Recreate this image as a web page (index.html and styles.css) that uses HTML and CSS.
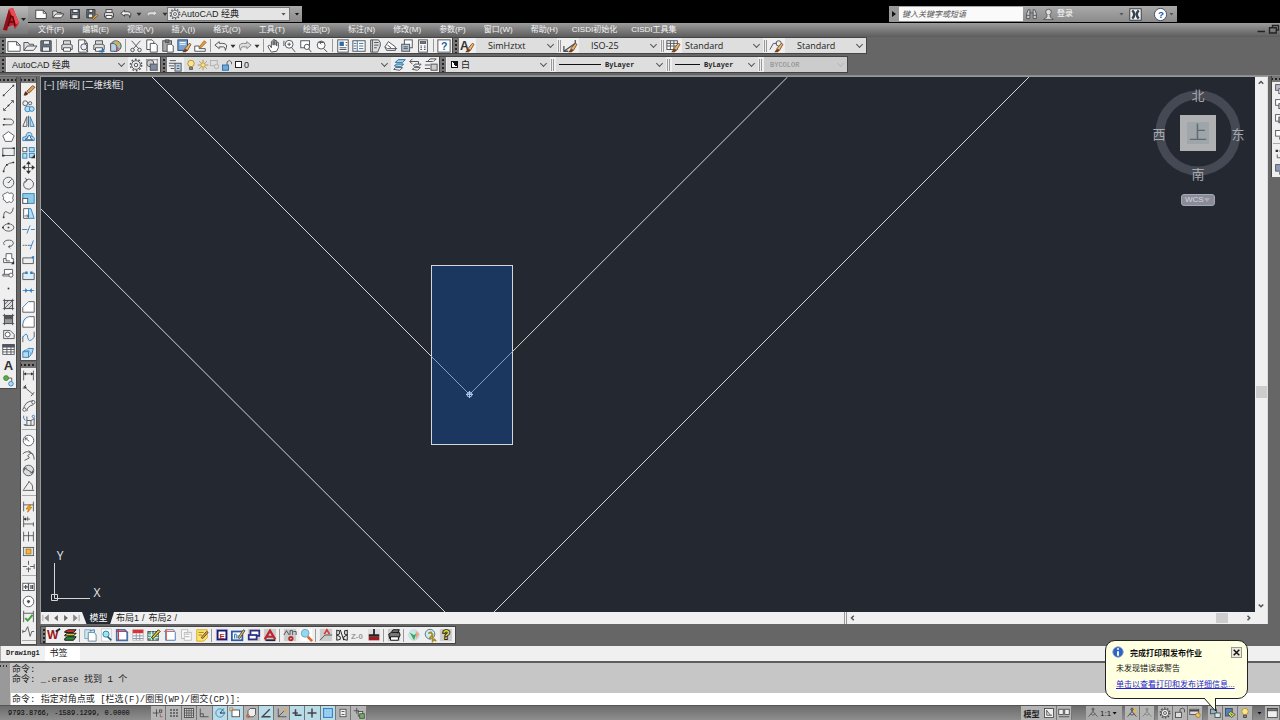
FILE: index.html
```html
<!DOCTYPE html>
<html lang="zh-CN">
<head>
<meta charset="utf-8">
<title>AutoCAD 经典 - Drawing1</title>
<link rel="stylesheet" href="styles.css">
</head>
<body>
<div class="app">
  <header class="head">
    <button class="logo" aria-label="应用程序菜单">
      <svg viewBox="0 0 28 28" width="28" height="28">
        <path d="M3 24 9 3l4-1 6 15-4 6-2-4-5 2-1 4z" fill="#c8202c"/>
        <path d="M3 24 9 3l2 6-4 15z" fill="#8c0f1a"/>
        <path d="m9 3 4-1 6 15-3 1z" fill="#f04a50"/>
        <path d="m8 20 3-10 2 1 2 9M9 16h5" stroke="#5c0810" stroke-width="1.500" fill="none"/>
        <path d="M21 12h5l-2.500 3z" fill="#222"/>
      </svg>
    </button>
    <div class="title">
      <div class="quick">
        <div class="tools" data-tools="new open save saveas print undo dd redo dd"></div>
        <label class="pick workspace"><svg class="i" data-icon="gear"></svg><select aria-label="工作空间"><option>AutoCAD 经典</option></select><i class="tri"></i></label>
        <button class="more" aria-label="自定义快速访问工具栏"><i class="tri dark"></i></button>
      </div>
      <div class="info">
        <button class="show" aria-label="展开"><i class="play"></i></button>
        <input class="search" type="text" aria-label="搜索" placeholder="键入关键字或短语">
        <div class="tools" data-tools="find user"></div>
        <button class="login">登录</button>
        <i class="tri"></i>
        <div class="tools" data-tools="exchange | question"></div>
        <i class="tri"></i>
      </div>
    </div>
    <nav class="menu">
      <button>文件(F)</button><button>编辑(E)</button><button>视图(V)</button><button>插入(I)</button><button>格式(O)</button><button>工具(T)</button><button>绘图(D)</button><button>标注(N)</button><button>修改(M)</button><button>参数(P)</button><button>窗口(W)</button><button>帮助(H)</button><button class="plug">CISDI初始化</button><button class="plug">CISDI工具集</button>
      <span class="wins"><button aria-label="最小化"><svg class="i" data-icon="min"></svg></button><button aria-label="还原"><svg class="i" data-icon="restore"></svg></button></span>
    </nav>
  </header>

  <div class="bars">
    <div class="row">
      <div class="bar"><i class="grip"></i><div class="tools" data-tools="new open save | print preview plot publish | cut copy paste match blockedit | undo dd redo dd | pan zoom zoomwin zoomprev | props center palette sheet markup calc | help"></div></div>
      <div class="bar styles"><i class="grip"></i>
        <div class="tools" data-tools="textstyle"></div><label class="pick sel far"><select aria-label="文字样式"><option>SimHztxt</option></select></label><i class="rule"></i>
        <div class="tools" data-tools="dimstyle"></div><label class="pick sel far"><select aria-label="标注样式"><option>ISO-25</option></select></label><i class="rule"></i>
        <div class="tools" data-tools="tablestyle"></div><label class="pick sel"><select aria-label="表格样式"><option>Standard</option></select></label><i class="rule"></i>
        <div class="tools" data-tools="leaderstyle"></div><label class="pick sel far"><select aria-label="多重引线样式"><option>Standard</option></select></label>
      </div>
    </div>
    <div class="row">
      <div class="bar"><i class="grip"></i><label class="pick ws"><select aria-label="工作空间列表"><option>AutoCAD 经典</option></select></label><div class="tools" data-tools="gear wssave"></div></div>
      <div class="bar"><i class="grip"></i><div class="tools" data-tools="layers"></div>
        <label class="pick layer"><svg class="i" data-icon="bulb"></svg><svg class="i" data-icon="sun"></svg><svg class="i" data-icon="freeze"></svg><svg class="i" data-icon="unlock"></svg><b class="box"></b><select aria-label="图层"><option>0</option></select></label>
        <div class="tools" data-tools="layercur layerprev layerstate"></div></div>
      <div class="bar"><i class="grip"></i>
        <label class="pick color"><b class="half"></b><select aria-label="颜色"><option>白</option></select></label><i class="rule"></i>
        <label class="pick ltype mono"><b class="line long"></b><select aria-label="线型"><option>ByLayer</option></select></label><i class="rule"></i>
        <label class="pick lweight mono"><b class="line"></b><select aria-label="线宽"><option>ByLayer</option></select></label><i class="rule"></i>
        <label class="pick plots mono off"><select aria-label="打印样式" disabled><option>BYCOLOR</option></select></label>
      </div>
    </div>
  </div>

  <main class="work">
    <aside class="dock">
      <div class="vbar draw"><i class="hgrip"></i><div class="tools v" data-tools="line xline pline polygon rect arc circle cloud spline ellipse earc insert block point hatch gradient region table mtext addsel"></div></div>
      <div class="stack">
        <div class="vbar modify"><i class="hgrip"></i><div class="tools v" data-tools="erase copyobj mirror offset array move rotate scale stretch trim extend breakpt break join chamfer fillet blend explode"></div></div>
        <div class="vbar dims"><i class="hgrip"></i><div class="tools v" data-tools="dlinear daligned darc dord | dradius djog ddia dang | dquick dbase dcont dspace dbreak | dtol dcenter dinspect djogline |"></div></div>
      </div>
    </aside>

    <section class="center">
      <div class="frame">
        <div class="canvas">
          <svg class="drawing" viewBox="41 77 1214 535" preserveAspectRatio="xMidYMid slice">
            <g stroke="#d4d6d9" fill="none" stroke-width="1">
              <path d="M152 77 469.500 394.500 787.500 77M41 209 445 612M494 612 1029 77"/>
              <rect x="431.500" y="265.500" width="81" height="179" fill="#1c375f"/>
              <path d="m431.500 356.500 38 38 43-43" stroke="#7f9fca"/>
              <circle cx="469.500" cy="394.500" r="2.500" stroke="#a9c8ee"/>
              <path d="M466 394.500h7M469.500 391v7" stroke="#a9c8ee"/>
              <path d="M54.500 563v35.500H90M51.500 594.500h6v6h-6z"/>
            </g>
            <g fill="none" stroke="#444954" stroke-width="9"><circle cx="1198" cy="133" r="38"/></g>
            <g class="compass"><text x="1198" y="100">北</text><text x="1198" y="179">南</text><text x="1159" y="139">西</text><text x="1238" y="139">东</text></g>
            <rect x="1180" y="115" width="36" height="36" fill="#aeb0b2"/>
            <rect x="1187" y="122" width="22" height="22" fill="#9fa6ab"/>
            <text class="face" x="1198" y="139">上</text>
            <g class="axis"><text x="60" y="560">Y</text><text x="97" y="597">X</text></g>
          </svg>
          <div class="view">[−] [俯视] [二维线框]</div>
          <button class="wcs">WCS <i></i></button>
        </div>
        <div class="vscroll"><svg class="i" data-icon="up"></svg><i class="s1"></i><b></b><i class="s2"></i><svg class="i" data-icon="down"></svg></div>
        <div class="under">
          <div class="nav"><svg class="i" data-icon="first"></svg><svg class="i" data-icon="prev"></svg><svg class="i" data-icon="next"></svg><svg class="i" data-icon="last"></svg></div>
          <button class="tab on">模型</button><button class="tab">布局1</button><i class="slash">/</i><button class="tab">布局2</button><i class="slash">/</i>
          <div class="hscroll"><svg class="i" data-icon="left"></svg><i></i><b></b><svg class="i" data-icon="right"></svg></div>
        </div>
      </div>
      <div class="extra"><i class="grip"></i><div class="tools" data-tools="cw cbooks | cfile csearch cframe ctable cedit cpage ccopy cnote | ce cpen cwin ca | cab cfind | cred cbb cz cbrush | cprint | cball cq1 cq2"></div></div>
    </section>

    <aside class="right"><div class="rbar"><i class="hgrip"></i><div class="tools v" data-tools="ord1 ord2 ord3 ord4 | ord5 ord6"></div></div></aside>
  </main>

  <div class="files"><button class="file mono">Drawing1</button><button class="file on">书签</button></div>

  <section class="cmd">
    <div class="cgrip"><i></i></div>
    <div class="ctext">
      <div class="log"><div>命令:</div><div>命令: _.erase 找到 1 个</div></div>
      <label class="prompt"><span>命令: 指定对角点或 [栏选(F)/圈围(WP)/圈交(CP)]:</span><input type="text" aria-label="命令行"></label>
    </div>
  </section>

  <footer class="status">
    <div class="coords">9793.8766, -1589.1299, 0.0000</div>
    <div class="tools s modes" data-tools="sinfer ssnap sgrid sortho spolar* sosnap* s3d strack* sucs sdyn* slwt* stran* sqp ssel"></div>
    <div class="sright">
      <button class="model">模型</button><div class="tools s" data-tools="slay sviews"></div>
      <div class="scale"><svg class="i" data-icon="person"></svg><span>1:1</span><i class="tri dark"></i></div>
      <div class="tools s" data-tools="personon personauto"></div>
      <div class="tools s" data-tools="gear unlock2 shard"></div>
      <div class="tools s tray" data-tools="splot scolor bulb"></div>
      <i class="tri dark"></i><div class="tools s" data-tools="sclean"></div>
    </div>
  </footer>

  <div class="balloon" role="status">
    <div class="bhead"><svg class="i" data-icon="infoball"></svg><strong>完成打印和发布作业</strong><button aria-label="关闭"><svg class="i" data-icon="x"></svg></button></div>
    <p>未发现错误或警告</p>
    <a href="#">单击以查看打印和发布详细信息...</a>
    <svg class="tail" viewBox="0 0 14 15" width="14" height="15"><path d="M1 0 12.500 13V0" fill="#ffffe1" stroke="#222"/></svg>
  </div>
</div>
<script src="app.js"></script>
</body>
</html>
```
FILE: styles.css
```css
* { box-sizing: border-box; }
body { margin: 0; background: #666; font: 9px "Liberation Sans", "Noto Sans CJK SC", sans-serif; color: #222; }
button, select, input { font: inherit; color: inherit; border: 0; padding: 0; margin: 0; background: none; border-radius: 0; white-space: nowrap; }
select { appearance: none; outline: 0; flex: 1; min-width: 0; line-height: 12px; }
i, b { display: block; flex: none; }
.i { width: 14px; height: 14px; flex: none; display: block; overflow: visible; fill: none; stroke: #50545a; stroke-width: 1.1; }
.i text { stroke: none; font-weight: bold; }
.app { display: flex; flex-direction: column; height: 100vh; min-height: 480px; overflow: hidden; position: relative; background: #666; }
.mono { font-family: "Liberation Mono", "Noto Sans CJK SC", monospace; font-size: 7px; font-weight: bold; }

.tools { display: flex; align-items: center; flex: none; }
.tools button { width: 16px; height: 15px; display: flex; align-items: center; justify-content: center; flex: none; }
.tools button.dd { width: 8px; }
.tools button.dd .i { width: 10px; height: 10px; }
.tools .sep { width: 3px; height: 13px; border-left: 1px solid #999; margin-left: 2px; }
.tri { width: 5px; height: 3px; background: #555; clip-path: polygon(0 0, 100% 0, 50% 100%); }
.tri.dark { background: #111; }
.play { width: 4px; height: 6px; background: #111; clip-path: polygon(0 0, 100% 50%, 0 100%); margin: auto; }

.head { display: grid; grid-template-columns: 28px 1fr; grid-template-rows: 23px 14px; background: #000; flex: none; }
.logo { grid-row: 1 / 3; grid-column: 1; margin-top: 6px; margin-bottom: 3px; background: linear-gradient(#bbb, #777); z-index: 1; height: 28px; }
.logo svg { display: block; }
.title { grid-column: 2; display: flex; justify-content: space-between; align-items: flex-start; padding: 6px 103px 0 0; }
.quick, .info { display: flex; align-items: center; height: 16px; background: linear-gradient(#a9a9a9, #8b8b8b); }
.quick { padding-left: 4px; gap: 2px; }
.quick .tools button { width: 17px; }
.quick .tools button.dd { width: 9px; }
.quick .tools { width: 133px; }
.quick .tools .i { width: 12px; height: 12px; stroke: #333; }
.workspace { width: 123px; height: 14px; background: #e4e4e4; border: 1px solid #777; padding: 0 3px 0 1px; }
.workspace .i { width: 12px; height: 12px; }
.pick { display: flex; align-items: center; position: relative; }
.more { width: 10px; height: 16px; display: flex; align-items: center; justify-content: center; }
.info { width: 288px; }
.show { width: 10px; height: 16px; display: flex; background: #999; }
.search { width: 124px; height: 14px; background: #fafafa; padding: 0 3px; font-size: 8px; font-style: italic; }
.search::placeholder { color: #555; opacity: 1; }
.info .tools button { width: 17px; }
.info .tools .i { width: 13px; height: 13px; }
.login { color: #fff; font-size: 8px; line-height: 12px; margin-right: auto; }
.info > .tri { margin-right: 3px; }
.info .sep { margin: 0 2px 0 3px; opacity: .4; }
.menu { grid-column: 1 / 3; grid-row: 2; display: flex; align-items: center; gap: 18px; padding-left: 38px; background: linear-gradient(#9c9c9c, #5c5c5c); color: #f4f4f4; font-size: 8px; }
.menu > button { line-height: 14px; }
.menu .plug { margin-left: -4px; }
.wins { display: flex; margin-left: auto; }
.wins .i { width: 12px; height: 12px; stroke: #222; }

.bars { flex: none; display: flex; flex-direction: column; gap: 2px; padding-bottom: 2px; border-bottom: 1px solid #8a8a8a; }
.row { display: flex; height: 17px; }
.bar { display: flex; align-items: center; background: #efefef; border: 1px solid #444; border-left: 0; flex: none; }
.grip { width: 6px; align-self: stretch; background: radial-gradient(circle, #222 1px, transparent 1px) 1px 1px / 4px 4px #777; }
.pick.sel, .ws, .layer, .color, .ltype, .lweight, .plots { height: 15px; background: #dedede; padding: 0 16px 0 3px; border-left: 1px solid #eee; }
.bar .pick::after { content: ""; position: absolute; right: 4px; top: 4px; width: 4px; height: 4px; border: solid #555; border-width: 0 1px 1px 0; transform: rotate(45deg); }
.sel { width: 82px; font-family: "Open Sans", "Noto Sans CJK SC", sans-serif; }
.bar .sel.far { padding-left: 12px; }
.rule { height: 12px; border: solid #999; border-width: 0 1px; margin: 0 1px; width: 3px; }
.ws { width: 122px; }
.bar .ws { padding-left: 5px; }
.layer { width: 208px; }
.layer .i { width: 12px; height: 12px; }
.bar .layer { padding-left: 1px; }
.box { width: 7px; height: 7px; background: #fff; border: 1px solid #222; margin: 0 2px; }
.color { width: 104px; }
.half { width: 7px; height: 7px; border: 1px solid #111; background: linear-gradient(45deg, #fff 50%, #111 50%); margin: 0 3px 0 1px; }
.ltype { width: 111px; }
.lweight { width: 87px; }
.line { width: 25px; height: 1px; background: #111; margin-right: 4px; }
.line.long { width: 42px; }
.plots { width: 84px; }
.bar .off { background: #ccc; color: #888; font-weight: normal; padding-left: 6px; }
.plots select { opacity: 1; }
.bar .off::after { border-color: #bbb; }

.work { flex: 1; display: flex; min-height: 0; }
.dock { display: flex; align-items: flex-start; gap: 3px; width: 40px; flex: none; }
.vbar { background: #efefef; border: 1px solid #4a4a4a; border-top: 0; }
.draw { width: 17px; height: 312px; margin-top: 1px; display: flex; flex-direction: column; border-left: 0; }
.stack { display: flex; flex-direction: column; gap: 1px; width: 17px; height: 100%; padding-top: 1px; }
.modify { height: 284px; display: flex; flex-direction: column; flex: none; }
.dims { height: 283px; flex: none; display: flex; flex-direction: column; }
.hgrip { height: 6px; flex: none; background: radial-gradient(circle, #222 1px, transparent 1px) 2px 1px / 4px 4px #777; }
.tools.v { flex-direction: column; flex: 1; min-height: 0; }
.v button { width: 100%; flex: 1; min-height: 0; height: auto; }
.v .i { width: 13px; height: 13px; }
.v .sep { width: 14px; height: 3px; margin: 1px 0; border: 0; border-top: 1px solid #aaa; }

.center { flex: 1; min-width: 0; display: flex; flex-direction: column; }
.frame { flex: 1; min-height: 0; display: grid; grid-template-columns: 1fr 12px; grid-template-rows: 1fr 12px; border: 1px solid #999; border-right-color: #ddd; border-bottom: 0; }
.canvas { background: #232831; position: relative; overflow: hidden; min-height: 0; }
.drawing { position: absolute; inset: 0; width: 100%; height: 100%; font-family: "Liberation Sans", "Noto Sans CJK SC", sans-serif; }
.compass text { font-size: 13px; fill: #a7a9ac; text-anchor: middle; }
.face { font-size: 18px; fill: #626a70; text-anchor: middle; }
.axis text { font-size: 12px; fill: #e4e6e9; text-anchor: middle; font-family: "Open Sans", sans-serif; }
.view { position: absolute; left: 3px; top: 2px; color: #e6e6e6; font-size: 9px; line-height: 12px; }
.wcs { position: absolute; right: 40px; top: 117px; width: 34px; height: 12px; border: 1px solid #a5a8b2; border-radius: 3px; background: #8a8d98; color: #d5d7de; font-size: 8px; line-height: 8px; text-align: left; padding-left: 3px; }
.wcs i { position: absolute; right: 4px; top: 3px; width: 6px; height: 4px; background: #a9acb6; clip-path: polygon(0 0, 100% 0, 50% 100%); }
.vscroll { background: #f0f0f0; display: flex; flex-direction: column; align-items: center; }
.vscroll .i, .hscroll .i { width: 12px; height: 12px; }
.vscroll b { width: 11px; height: 12px; background: #cdcdcd; }
.s1 { flex: 297; }
.s2 { flex: 202; }
.under { grid-column: 1 / 3; background: #f0f0f0; display: flex; align-items: center; min-width: 0; }
.nav { display: flex; width: 41px; }
.nav .i { width: 10px; height: 10px; }
.tab { padding: 0 4px 0 5px; line-height: 11px; height: 12px; }
.tab.on { background: #232831; color: #fff; width: 32px; clip-path: polygon(0 0, 100% 0, 88% 100%, 14% 100%); margin-right: -3px; }
.slash { font-style: normal; margin: 0 -1px; }
.hscroll { margin-left: auto; width: 34.500%; height: 12px; display: flex; align-items: center; border-left: 3px double #999; padding-right: 12px; }
.hscroll i { flex: 1; }
.hscroll b { width: 12px; height: 10px; background: #cdcdcd; margin-right: 15px; }
.extra { align-self: flex-start; display: flex; align-items: center; height: 18px; margin: 2px 0; background: #efefef; border: 1px solid #444; flex: none; padding-right: 1px; }
.extra .grip { width: 5px; }
.extra .sep { margin-left: 1px; }
.right { width: 12px; flex: none; display: flex; justify-content: flex-end; align-items: flex-start; overflow: hidden; }
.rbar { width: 9px; height: 101px; background: #efefef; border-left: 1px solid #444; overflow: hidden; display: flex; flex-direction: column; }
.rbar .tools { width: 16px; }

.files { height: 15px; flex: none; background: #f0f0f0; display: flex; align-items: center; }
.file { height: 15px; line-height: 15px; padding: 0 5px; }
.file.on { background: #fff; padding-right: 12px; }
.file.mono { border-left: 1px solid #aaa; }
.cmd { flex: none; display: flex; border-top: 2px solid #5c5c5c; background: #c6c6c6; font-family: "Liberation Mono", "Noto Sans CJK SC", monospace; }
.cgrip { width: 11px; flex: none; background: #999; border-right: 1px solid #ccc; padding-top: 2px; }
.cgrip i { width: 9px; height: 2px; background: repeating-linear-gradient(90deg, #333 0 1px, transparent 1px 3px); }
.ctext { flex: 1; padding-left: 1px; min-width: 0; }
.log { height: 30px; line-height: 10px; padding-top: 2px; }
.prompt { display: flex; background: #fff; height: 12px; line-height: 14px; margin-left: -1px; padding-left: 1px; }
.prompt span { flex: none; }
.prompt input { flex: 1; min-width: 0; outline: 0; height: 12px; }

.status { flex: none; height: 15px; display: flex; align-items: center; background: linear-gradient(#6c6c6c, #8e8e8e); border-top: 1px solid #555; }
.coords { width: 151px; padding-left: 8px; font: 7px "Liberation Mono", monospace; color: #000; flex: none; }
.s button { background: #b5b5b5; border-right: 1px solid #777; height: 14px; width: 15px; }
.s .i { width: 12px; height: 12px; stroke: #444; }
.modes { width: 216px; }
.modes button { flex: 1; min-width: 0; }
.s button.lit { background: #b9dde8; }
.sright { margin-left: auto; display: flex; align-items: center; gap: 3px; height: 14px; }
.model { background: #b5b5b5; height: 14px; width: 21px; font-size: 8px; font-weight: bold; margin-right: -3px; }
.scale { display: flex; align-items: center; background: #aaa; height: 14px; padding-left: 1px; gap: 1px; width: 36px; margin-left: 11px; font-size: 8px; }
.scale .i { width: 12px; }
.tray { margin-left: 2px; }
.sright > .tri { margin-left: 1px; }

.balloon { position: absolute; right: 32px; bottom: 21px; width: 143px; height: 59px; background: #ffffe1; border: 1px solid #222; border-radius: 10px; font-size: 8px; color: #111; padding: 5px 5px 0 10px; }
.bhead { display: flex; align-items: center; height: 12px; }
.bhead > .i { width: 12px; height: 12px; margin-left: -4px; }
.bhead strong { margin-left: 6px; }
.bhead button { margin-left: auto; width: 11px; height: 11px; border: 1px solid #999; background: #ece9d8; }
.bhead button .i { width: 9px; height: 9px; stroke: #111; stroke-width: 2.600; }
.balloon p { margin: 5px 0 4px; line-height: 12px; }
.balloon a { display: block; color: #2222dd; line-height: 12px; white-space: nowrap; }
.tail { position: absolute; left: 97px; bottom: -15px; display: block; }
```
FILE: app.js
```js
// Icon drawings on a 16 x 16 grid. Default stroke comes from the .i class.
const B = 'stroke="#2f7fc4"', BF = 'fill="#b5dcf2" stroke="#3180b8"', K = 'fill="#333" stroke="none"';
const p = (d, a = '') => `<path d="${d}" ${a}/>`;
const c = (x, y, r, a = '') => `<circle cx="${x}" cy="${y}" r="${r}" ${a}/>`;
const r = (x, y, w, h, a = '') => `<rect x="${x}" y="${y}" width="${w}" height="${h}" ${a}/>`;
const t = (s, x, y, z, f = '#333') => `<text x="${x}" y="${y}" font-size="${z}" fill="${f}">${s}</text>`;
const person = p('M8 2v5M8 6 2 13M8 6l6 7M5 9l3 2 3-2') + c(8, 3, 1.5);
const brush = p('m9 11 5-6 2 1-4 7z', 'fill="#e8b877" stroke="#86572a"') + p('m6 15 3-4 3 2-2 2z', 'fill="#7a3f1d" stroke="none"');
const layer = p('m4 5 3-3h8l-3 3zM3 9l2-2h8l-3 3zM2 13l2-2h8l-3 3z', 'fill="#fff"');
const page = 'M3 1h7l3 4v10H3z';
const pageSvg = p(page, 'fill="#fff"') + p('M10 1v4h3');
const printer = p('M4 6V2h8v4M2 7l2-1h8l2 1v5H2z', 'fill="#ddd"') + p('M4 10h8v4H4z', 'fill="#fff"');
const dim = 'M2 2v12M14 2v12M2 6h12';

const icons = {
  new: p('M1 3h10l4 4v7H1z', 'fill="#fff"') + p('M11 3v4h4'),
  open: p('M1 13V4h5l1 2h5v2', 'fill="#ddd"') + p('m1 13 4-5h11l-4 5z', 'fill="#eee"'),
  save: p('M2 2h12v12H2z', 'fill="#657387"') + r(5, 2, 7, 4, 'fill="#eee"') + r(4, 9, 8, 5, 'fill="#eee"'),
  saveas: p('M1 2h11v11H1z', 'fill="#657387"') + r(4, 2, 5, 4, 'fill="#eee"') + r(3, 8, 6, 5, 'fill="#eee"') + p('m8 14 6-6 2 2-6 5z', 'fill="#e9a33b" stroke="#7d511b"'),
  print: printer,
  undo: p('M6 3 1 7l5 4V9h5q2 0 2 4 4-8-3-8H6z', 'fill="#eee"'),
  redo: p('m10 3 5 4-5 4V9H5q-2 0-2 4-4-8 3-8h4z', 'stroke="#888" fill="#ddd"'),
  dd: p('M4 6h8l-4 5z', K),
  find: p('M2 7 4 2h2v11H2zM14 7l-2-5h-2v11h4zM6 6h4', 'fill="#ccc"') + p('M2 9h4M10 9h4'),
  user: c(8, 5, 3.5, 'fill="#ddd"') + p('M6 8v3l-4 3h12l-4-3V8', 'fill="#ddd"'),
  exchange: r(1, 1, 14, 14, 'fill="#f4f4f4" stroke="#333"') + p('M4 3q5 5 0 10M12 3q-5 5 0 10', 'stroke="#345" stroke-width="3"'),
  question: c(8, 8, 7.5, 'fill="#fff" stroke="#345"') + t('?', 4.8, 12.5, 12, '#1c51b5'),
  gear: c(8, 8, 5, 'fill="#eee"') + c(8, 8, 6.5, 'stroke-dasharray="2 2.080" stroke-width="1.600"') + c(8, 8, 2),
  min: p('M2 10h10', 'stroke-width="2"'),
  restore: p('M6 5V2h8v6h-3M2 5h9v7H2z', 'stroke-width="1.800"'),
  preview: pageSvg + c(9, 9, 3.5, 'fill="#eef"') + p('m11 12 3 3'),
  plot: printer + p('M8 13h3v-2l4 3-4 2v-1H8z', 'fill="#2875b8" stroke="none"'),
  publish: c(9, 8, 6, 'fill="#9bc8ae"') + p('m9 2 5 3-5 3z', 'fill="#e4a93c" stroke="none"') + p('M9 8v6l5-3z', 'fill="#d27082" stroke="none"') + p('M3 5v9h7V8L7 5z', 'fill="#b8cfe7"'),
  cut: p('M3 2l8 9M13 2 5 11') + c(4, 12.5, 2) + c(12, 12.5, 2),
  copy: p('M2 1h6l2 2v9H2z', 'fill="#fff"') + p('M6 5h6l2 2v8H6z', 'fill="#fff"'),
  paste: r(2, 2, 10, 12, 'fill="#aaa"') + r(5, 1, 4, 3, 'fill="#777"') + p('M7 6h5l2 2v7H7z', 'fill="#fff"'),
  match: r(1, 1, 11, 12, 'fill="#7ba5cf" stroke="#234b78"') + p('M3 4h7M3 6h7', 'stroke="#fff"') + brush,
  blockedit: p('M2 14V8h5v3h7v3z', 'fill="#fff"') + p('m7 9 6-7 2 2-6 6z', 'fill="#e6a13d" stroke="#a9681c"'),
  pan: p('M5 15q-4-6-4-7l2-1 2 3V3q1-2 2 0v4-6q1-1 2 0v6-5q2-1 2 0v6-4q2-1 2 0v6l-2 4z', 'fill="#fff"'),
  zoom: c(7, 6, 4.5, 'fill="#fff"') + p('m10 10 4 5M5 6h4M7 4v4M1 2v6'),
  zoomwin: r(2, 2, 10, 8, 'fill="#fff"') + c(9, 9, 3, 'fill="#fff"') + p('m11 11 3 4'),
  zoomprev: c(7, 7, 4.5, 'fill="#fff"') + p('m10 11 4 4M10 4H5l2-2M5 4l2 2'),
  props: r(2, 1, 12, 14, 'fill="#fff"') + r(4, 3, 5, 5, 'fill="#2f6ca8" stroke="none"') + p('M4 10h8M4 12h8M11 4h2M11 7h2'),
  center: r(1, 2, 14, 12, 'fill="#fff"') + p('M6 2v12M2 5h3M2 8h3M2 11h3M8 5h5M8 8h5M8 11h5', 'stroke="#456f9b"'),
  palette: p('M3 1h9l2 3v4l-3 7H3z', 'fill="#ddd"') + p('M5 1v14M7 4h5M7 7h5M7 10h3'),
  sheet: p('m1 9 4-6 8 6v4H3z', 'fill="#fff"') + p('m1 9 3 2h11M4 7l4 3'),
  markup: r(5, 1, 9, 9, 'fill="#fff"') + r(2, 6, 9, 8, 'fill="#b7c8d8"') + p('M4 9h5M4 11h5'),
  calc: r(3, 1, 10, 14, 'fill="#fff"') + r(5, 3, 6, 2, 'fill="#789"') + p('M5 8h2M9 8h2M5 10h2M9 10h2M5 12h2M9 12h2'),
  help: r(1, 1, 14, 14, 'fill="#fff"') + t('?', 4.5, 12.5, 12, '#24649c'),
  textstyle: t('A', 0, 12, 14) + brush,
  dimstyle: p('M1 14 14 5M1 8v6h5M14 1v5', 'stroke-width="1.500"') + brush,
  tablestyle: r(1, 2, 12, 10, 'fill="#fff"') + p('M1 5h12M1 8h12M5 2v10M9 2v10') + brush,
  leaderstyle: p('M1 12 5 5h4') + c(11, 5, 3) + brush,
  wssave: c(6, 6, 4, 'fill="#ccc"') + r(6, 7, 8, 7, 'fill="#7d8ca1"') + p('M1 2h14M2 1v14M14 1v14', 'stroke="#888"'),
  layers: p('M2 3h7M1 6h7M1 9h6M3 12h4') + r(8, 6, 7, 9, 'fill="#b7d0e8"') + p('M10 9h3M10 12h3'),
  bulb: c(8, 6, 4.3, 'fill="#fbe38c" stroke="#a98a33"') + p('M6 11h4v3H6z', 'fill="#888"'),
  sun: c(8, 8, 3, 'fill="#fbe38c" stroke="#a98a33"') + p('M8 1v3M8 12v3M1 8h3M12 8h3M3 3l2 2M11 11l2 2M13 3l-2 2M5 11l-2 2', 'stroke="#a98a33"'),
  freeze: r(2, 2, 9, 7, 'stroke="#aaa"') + c(10, 10, 3, 'fill="#ddd" stroke="#aaa"'),
  unlock: r(2, 8, 8, 7, 'fill="#6cabe0" stroke="#205f9c"') + p('M8 8V4q3-4 6 0v3'),
  unlock2: r(2, 7, 8, 7, 'fill="#ddd"') + p('M8 7V3q3-3 6 0v4'),
  layercur: layer + p('m4 5 3-3h8l-3 3z', BF) + p('m3 9 2-2h8l-3 3z', BF),
  layerprev: p('M6 9l2-2h7l-3 3zM5 13l2-2h7l-3 3z', 'fill="#fff"') + p('m5 1-3 3 3 3M2 4h10v3'),
  layerstate: p('M2 4h8M1 8h6M1 12h6M4 4l3-3h7l-3 3') + r(8, 7, 7, 7, 'fill="#ccc"'),
  line: p('M2 14 14 2') + p('M1 13h2v2H1zM13 1h2v2h-2z', K),
  xline: p('M2 14 14 2M11 2h3v3M2 11v3h3') + p('M7 7h2v2H7z', K),
  pline: p('M3 5h8q6 3 1 7H2') + p('M1 11h2v2H1zM2 4h2v2H2z', K),
  polygon: p('m8 2 7 5-3 7H4L1 7z', 'fill="#fff"'),
  rect: r(1, 4, 14, 9, 'fill="#eee"') + p('M0 12h3v2H0zM13 3h3v2h-3z', K),
  arc: p('M2 14Q3 4 14 3') + p('M1 13h2v2H1zM5 5h2v2H5zM13 2h2v2h-2z', K),
  circle: c(8, 8, 6.5) + p('m8 8 4-4M7 8h2'),
  cloud: p('M4 3q3-3 5 0 5-2 5 3-2 3 0 5-2 5-5 2-4 3-5-1-4-1-2-4-3-4 2-5z', 'fill="#fff"'),
  spline: p('M2 14Q2 4 7 8t7-6') + p('M1 13h2v2H1z', K),
  ellipse: `<ellipse cx="8" cy="8" rx="6.500" ry="4.500"/>` + p('M7 7h2v2H7zM7 2h2v2H7zM0 7h2v2H0z', K),
  earc: p('M3 10Q0 6 6 4q8-1 8 4-1 4-6 4l2-2m-2 2 2 2'),
  insert: p('M5 7V2h7v6h2v5H2V8h3v3h5', 'fill="#fff"') + p('M11 15h4v-4z', K),
  block: p('M3 9V3h10v6M1 9h8v2H1z', 'fill="#fff"') + c(11, 10, 2.5, 'fill="#fff"'),
  point: r(7, 7, 2, 2, K),
  hatch: r(3, 3, 10, 10, 'fill="#ddd"') + p('M1 3h14M1 13h14M3 1v14M13 1v14M3 8l5-5M3 13 13 3M8 13l5-5', 'stroke-width="1"'),
  gradient: r(3, 3, 10, 10, 'fill="#999"') + r(3, 3, 10, 4, 'fill="#555"') + p('M1 3h14M1 13h14M3 1v14M13 1v14'),
  region: p('M2 3h8l5 5v5H2z', 'fill="#eee"') + c(7, 8, 3, 'fill="#fff"'),
  table: r(1, 2, 14, 12, 'fill="#fff"') + r(1, 2, 14, 3, 'fill="#556"') + p('M1 8h14M1 11h14M6 5v9M11 5v9'),
  mtext: t('A', 2, 14, 16),
  addsel: c(5, 5, 3, 'fill="#5fae42" stroke="#3b7e2b"') + p('M8 5h4v4') + c(11, 12, 2.800, BF),
  erase: p('m6 9 7-7 3 2-7 7z', 'fill="#dba25b" stroke="#7a4b20"') + p('m2 14 2-5 4 3-3 2z', 'fill="#5a2a1c" stroke="none"'),
  copyobj: c(4, 4, 3) + c(10, 4, 2) + c(7, 11, 3.500, BF) + c(12, 11, 3, BF),
  mirror: p('M6 2v12H1zM8 1v14') + p('M10 2v12h5z', BF),
  offset: p('M1 13V9l4-1q0-5 4-5t3 5q4 0 3 5z', BF) + p('M4 12q0-2 3-2 0-4 3-3 0 4 3 5z', 'fill="#fff" stroke="#234e7f"'),
  array: r(1, 2, 5, 5, 'fill="#fff"') + r(9, 2, 6, 5, BF) + r(1, 9, 5, 6, BF) + r(9, 9, 6, 5, BF) + p('M11 15h5v-5z', K),
  move: p('M8 3v10M3 8h10') + p('m8 0 3 4H5zM8 16l-3-4h6zM0 8l4-3v6zM16 8l-4 3V5z', K),
  rotate: p('M5 4q5-4 9 3 1 6-5 8-7 0-7-6 0-4 4-5L4 1m2 3L4 7'),
  scale: r(1, 2, 14, 12, 'fill="#8ccbea" stroke="#2d82b4"') + r(1, 8, 6, 6, 'fill="#fff"'),
  stretch: p('M2 2h6v12H2z', 'fill="#fff"') + p('M8 2h3l4 12H8z', BF) + p('M3 11h5M6 9l2 2-2 2'),
  trim: p('M0 8h5M11 8h5', B) + p('M6 13 10 3', B) + p('M5 8h4', 'stroke-dasharray="1 1"'),
  extend: p('M1 9h8', 'stroke-dasharray="2 1"') + p('m10 14 4-11M9 9h3', B),
  breakpt: p('M1 6h11M1 6v7h13V7') + r(12, 4, 3, 3, 'fill="#2f7fc4" stroke="none"'),
  break: p('M5 5H1v8h14V5h-4', 'fill="#dceef8"') + p('M4 3h3v3H4zM10 3h3v3h-3z', 'fill="#2f7fc4" stroke="none"'),
  join: p('M1 8h14', B) + p('m4 5 3 3-3 3zM12 5 9 8l3 3z', 'fill="#2f7fc4" stroke="none"'),
  chamfer: p('M1 9v6h14V2H8', 'fill="#fff"') + p('m1 9 7-7', B),
  fillet: p('M1 11v4h14V2H9', 'fill="#fff"') + p('M1 11q1-8 8-9', B),
  blend: p('M1 15V8M15 2v7') + p('M1 9q5-8 6 0t8 0', B),
  explode: p('M1 7l3-2h7v6l-3 3H1zM1 7h7v7M8 7l3-2', BF) + p('M7 3h7l-2 7', BF),
  dlinear: p(dim) + p('m5 4-3 2 3 2zM11 4l3 2-3 2z', K),
  daligned: p('M2 3l12 10M5 1 1 6M15 10l-4 5') + p('M3 2v4l3-2z', K),
  darc: p('M2 14Q2 3 14 2M6 15q0-6 8-8') + c(3, 13, 2, 'fill="#fff"') + c(14, 4, 2, 'fill="#fff"'),
  dord: p('M2 2v3l2 3M2 13h3', B) + p('M6 3v11M3 14h12V5M6 8h5v6M11 8l4-2') + c(14, 3, 1.5, B),
  dradius: c(8, 8, 6.500, 'fill="#fff"') + p('m9 9-5-4M4 8V5h3'),
  djog: p('M1 6q5-6 13 1M15 13Q15 6 8 2M3 14l6-3-2-3 4-3'),
  ddia: c(8, 8, 6.500, 'fill="#ddd"') + p('m3 5 10 6M3 8V5h3M13 8v3h-3'),
  dang: p('M1 14h14M2 13 9 3M8 3q6 3 5 10'),
  dquick: p(dim) + p('m9 6-4 5h3l-1 4 5-6H9l2-3z', 'fill="#f5ad26" stroke="#c4760c"'),
  dbase: p('M2 1v14M7 2v5M14 9v5M2 5h8M2 11h12') + p('m5 3-3 2 3 2z', K),
  dcont: p('M2 2v12M8 2v12M14 2v12M2 7h12'),
  dspace: p('M1 3h14M1 13h14M2 3v10M14 3v10') + r(5, 5, 6, 6, 'fill="#f4b63b" stroke="#ad751a"'),
  dbreak: p('M8 1v5M8 9v6M1 8h5M10 8h5M5 11h6M15 5v6'),
  dtol: r(1, 4, 14, 9, 'fill="#fff"') + p('M8 4v9M4.500 6v5M2 8.500h5M11 6v5M13 6v5', 'stroke-width="1.600"'),
  dcenter: c(8, 8, 6.500, 'fill="#fff"') + p('M8 6v4M6 8h4', 'stroke-width="2"'),
  dinspect: p('M2 1v14M14 1v14M2 4h12') + p('m4 10 3 3 6-7', 'stroke="#3fa43a" stroke-width="2.500"'),
  djogline: p('M1 8h3l3-6 3 12 2-6h3M1 6v4'),
  up: p('m5 9 3-3 3 3', 'stroke-width="2"'), down: p('m5 6 3 3 3-3', 'stroke-width="2"'),
  left: p('M9 5 6 8l3 3', 'stroke-width="2"'), right: p('m6 5 3 3-3 3', 'stroke-width="2"'),
  first: p('M3 3v10M12 3 6 8l6 5z', 'fill="#888" stroke="#888"'), prev: p('m11 3-6 5 6 5z', 'fill="#666" stroke="none"'),
  next: p('m5 3 6 5-6 5z', 'fill="#666" stroke="none"'), last: p('M13 3v10M4 3l6 5-6 5z', 'fill="#888" stroke="#888"'),
  cw: t('W', 0, 13, 14, '#9c1720') + p('m10 4 5-3', 'stroke="#222" stroke-width="2"'),
  cbooks: p('m2 4 4-2h9l-3 3H2z', 'fill="#d33" stroke="#111"') + p('m2 8 3-2h10l-3 3H2z', 'fill="#d9c733" stroke="#111"') + p('m2 12 3-2h10l-3 4H2z', 'fill="#278b3d" stroke="#111"'),
  cfile: p('M2 2h7v10H2z', 'fill="#cfe8f5" stroke="#8ab"') + p('M6 5h7l2 3v7H6z', 'fill="#fff" stroke="#689"') + p('M8 3l5-1v3', B),
  csearch: r(3, 1, 11, 14, 'fill="#fff" stroke="#ccc"') + c(8, 7, 3.500, 'fill="#a7e2f3" stroke="#2389ae"') + p('m10 10 4 4', 'stroke="#257" stroke-width="2"'),
  cframe: p('M2 2h9l3 3v9H2z', 'fill="#fff" stroke="#4a6faa" stroke-width="2"') + p('M1 4h12M4 1v13', 'stroke="#c34"'),
  ctable: r(2, 2, 12, 12, 'fill="#fff" stroke="#bbb"') + r(2, 2, 12, 4, 'fill="#d8323a" stroke="none"') + p('M2 9h12M2 12h12M6 6v8M10 6v8', 'stroke="#89a"'),
  cedit: r(1, 4, 12, 10, 'fill="#6da497"') + p('M1 8h12M1 11h12M5 4v10M9 4v10', 'stroke="#dfd"') + p('m5 11 8-9 2 2-8 8z', 'fill="#f4d12c" stroke="#222"'),
  cpage: p('M3 2h9l2 3v9H3z', 'fill="#fff" stroke="#467bb7"') + p('M1 4h12M4 1v13', 'stroke="#d65"'),
  ccopy: r(3, 2, 7, 10, 'fill="#fff" stroke="#bbb"') + r(6, 5, 8, 9, 'fill="#fff" stroke="#bbb"') + p('M7 7h5M7 10h5', 'stroke="#aaa"'),
  cnote: p('M2 2h12v9l-4 4H2z', 'fill="#ffe66b" stroke="#d6a927"') + p('M4 5h6M4 8h4', 'stroke="#997d20"') + p('m7 11 6-7 2 1-6 7z', 'fill="#f19b24"'),
  ce: r(1, 1, 14, 14, 'fill="#bcc3ed" stroke="none"') + r(3, 3, 10, 10, 'fill="#fff" stroke="#191b6c" stroke-width="2"') + t('E', 5, 12, 9, '#b22'),
  cpen: r(1, 4, 12, 10, 'fill="#fff" stroke="#2a5ba4" stroke-width="2"') + p('M4 12V7h2v5M8 12V8', B) + p('m8 11 6-9 2 1-6 9z', 'fill="#e9bb47"'),
  cwin: r(1, 1, 14, 14, 'fill="#ccc" stroke="none"') + r(4, 3, 10, 6, 'fill="#fff" stroke="#2d2f87" stroke-width="2"') + r(2, 8, 9, 5, 'fill="#fff" stroke="#2d2f87" stroke-width="2"'),
  ca: r(1, 1, 14, 14, 'fill="#ccc" stroke="none"') + p('M2 13 8 3l6 10M4 10h8', 'stroke="#bd252b" stroke-width="2.500"') + p('M3 14h11', 'stroke="#224" stroke-width="2"'),
  cab: r(1, 1, 14, 14, 'fill="#ccc" stroke="none"') + p('M1 8 4 3l3 5M8 8V3h3v5M12 4h3v4') + c(9, 12, 2, 'stroke="#b22" stroke-width="2"'),
  cfind: r(1, 1, 14, 14, 'fill="#fff" stroke="none"') + c(7, 6, 4.500, 'fill="#8edaf2" stroke="#83a0b9"') + p('m10 10 5 5', 'stroke="#e0662b" stroke-width="3"'),
  cred: r(1, 1, 14, 14, 'fill="#ccc" stroke="none"') + p('M1 14 7 8h8') + p('m6 7 3-5 3 5', 'stroke="#d33" stroke-width="1.800"'),
  cbb: p('M2 2v12M2 3h3v4l-3 1 4 2v3l-4 1M14 2v12M14 3h-3v4l3 1-4 2v3l4 1M6 2l4 12', 'stroke="#222"'),
  cz: t('Z-0', 0, 12, 9, '#999'),
  cbrush: r(1, 1, 14, 14, 'fill="#ddd" stroke="none"') + p('M7 1h2v6h5v3H2V7h5z', 'fill="#222" stroke="none"') + r(2, 10, 12, 4, 'fill="#a51820" stroke="none"'),
  cprint: r(1, 1, 14, 14, 'fill="#ccc" stroke="none"') + p('M5 5 7 2h7l-2 4M2 7l3-2h9l1 3-2 4H3z', 'fill="#777" stroke="#111"') + p('M4 10h9v4H4z', 'fill="#fff" stroke="#111"'),
  cball: c(8, 8, 6, 'fill="#c9e9ef" stroke="#bdd"') + p('m3 5 5 9 3-8-3 2z', 'fill="#39a95a" stroke="none"') + p('m10 3 4 4-4 6z', 'fill="#f1a08b" stroke="none"'),
  cq1: c(8, 7, 5.500, 'fill="#cdeaf3" stroke="#578"') + p('m6 6 3-1 2 3-3 3v2M11 9v6l2-2 2 2', 'stroke="#a78b24" stroke-width="2"'),
  cq2: r(1, 1, 14, 14, 'fill="#ccc" stroke="none"') + `<text x="4" y="13" font-size="14" fill="#e0d52c" style="stroke:#222;stroke-width:2;paint-order:stroke">?</text>`,
  ord1: r(2, 2, 11, 7, 'fill="#bbc"') + r(6, 7, 8, 6, 'fill="#fff"'), ord2: r(2, 2, 11, 7, 'fill="#fff"') + r(6, 7, 8, 6, 'fill="#ccd"'),
  ord3: r(2, 2, 11, 8, 'fill="#fff"') + r(6, 5, 8, 7, 'fill="#99a"'), ord4: r(2, 3, 11, 7, 'fill="#fff"') + p('M7 11v3h8'),
  ord5: p('M2 2h3v3H2zM7 2h3v3H7z', K) + p('M4 8v4h6'), ord6: r(2, 2, 12, 8, 'fill="#8b9db6"') + p('M7 11v3h7'),
  sinfer: p('M1 8h8M6 3v10') + r(10, 4, 3, 3) + p('M11 9v4h3', 'stroke="#b44"'),
  ssnap: p('M3 3h2v2H3zM7 3h2v2H7zM11 3h2v2h-2zM3 7h2v2H3zM7 7h2v2H7zM11 7h2v2h-2zM3 11h2v2H3zM7 11h2v2H7zM11 11h2v2h-2z', K),
  sgrid: r(2, 2, 12, 12, 'fill="#ddd"') + p('M5 2v12M8 2v12M11 2v12M2 5h12M2 8h12M2 11h12', 'stroke-width="1"'),
  sortho: p('M3 2v11h11M3 9h4v4'), spolar: c(8, 8, 5.500, B) + p('M15 8H8l5-6M8 8h3', 'stroke="#245"'),
  sosnap: r(4, 4, 10, 9, 'fill="#fff"') + r(1, 1, 4, 4, 'stroke="#d77b35"'),
  s3d: p('M4 5 7 2h7v8l-3 3H4z', 'fill="#eee"') + c(4, 12, 2, 'stroke="#c65b33"'),
  strack: p('M13 3 3 13h11', 'stroke-width="1.800"'), sucs: p('M3 2v11h11M3 13l8-8') + p('m10 5 2-3 3 3-3 2z', 'fill="#eaa63c" stroke="none"'),
  sdyn: p('M2 8h7M6 3v8h8', 'stroke-width="2"'), slwt: p('M8 2v12M2 8h12', 'stroke-width="2"'),
  stran: r(2, 2, 12, 12, 'fill="#7fbbe8" stroke="#2979bd"') + p('M3 5h10M3 8h10M3 11h10M5 3v10M8 3v10M11 3v10', 'stroke="#aedbf3" stroke-width="1"'),
  sqp: r(4, 3, 8, 10, 'fill="#eee"') + p('M6 6h4M6 10h4'), ssel: p('M1 5h7M5 1v8') + r(7, 6, 6, 6, 'fill="#ddd"') + r(9, 9, 6, 6, 'fill="#6db65b"'),
  slay: r(2, 2, 12, 12, 'fill="#eee"') + p('M5 4v7h7M5 5l5 6'), sviews: r(1, 3, 6, 7, 'fill="#eee"') + r(9, 3, 6, 7, 'fill="#eee"') + p('M1 13h14'),
  person, personon: person + p('m10 5 2-3 3 3-3 3z', 'fill="#f2b52b" stroke="none"'), personauto: `<g opacity=".45">${person}</g>`,
  shard: r(1, 3, 12, 7, 'fill="#ddd"') + p('M1 5h12', 'stroke-width="2"') + c(12, 11, 3, 'fill="#f2c56a" stroke="#aa7a25"'),
  splot: r(2, 3, 8, 6, 'fill="#8ab7cf"') + r(8, 8, 7, 6, 'fill="#d8e9e8"'),
  scolor: r(2, 2, 9, 10, 'fill="#4b84c4"') + p('m5 9 4-3 6 4-5 4z', 'fill="#e8d64c"') + p('m8 8 4 2-2 2z', 'fill="#359447" stroke="none"'),
  sclean: r(2, 2, 13, 12, 'fill="#eee"') + r(2, 2, 13, 3, 'fill="#777"'),
  infoball: c(8, 8, 7, 'fill="#2e62c5" stroke="#8aa3ce"') + p('M8 3v2M8 7v6', 'stroke="#fff" stroke-width="2.500"'),
  x: p('m3 3 10 10M13 3 3 13')
};

// Each toolbar lists its commands; "|" is a separator and "*" marks a switched-on mode.
document.querySelectorAll('[data-tools]').forEach(bar => {
  bar.innerHTML = bar.dataset.tools.split(' ').map(name => {
    if (name === '|') return '<i class="sep"></i>';
    const id = name.replace('*', '');
    const cls = (id === 'dd' ? 'dd ' : '') + (name.endsWith('*') ? 'lit' : '');
    return `<button class="${cls}" aria-label="${id}"><svg class="i" data-icon="${id}"></svg></button>`;
  }).join('');
});

document.querySelectorAll('[data-icon]').forEach(svg => {
  svg.setAttribute('viewBox', '0 0 16 16');
  svg.innerHTML = icons[svg.dataset.icon];
});
```
